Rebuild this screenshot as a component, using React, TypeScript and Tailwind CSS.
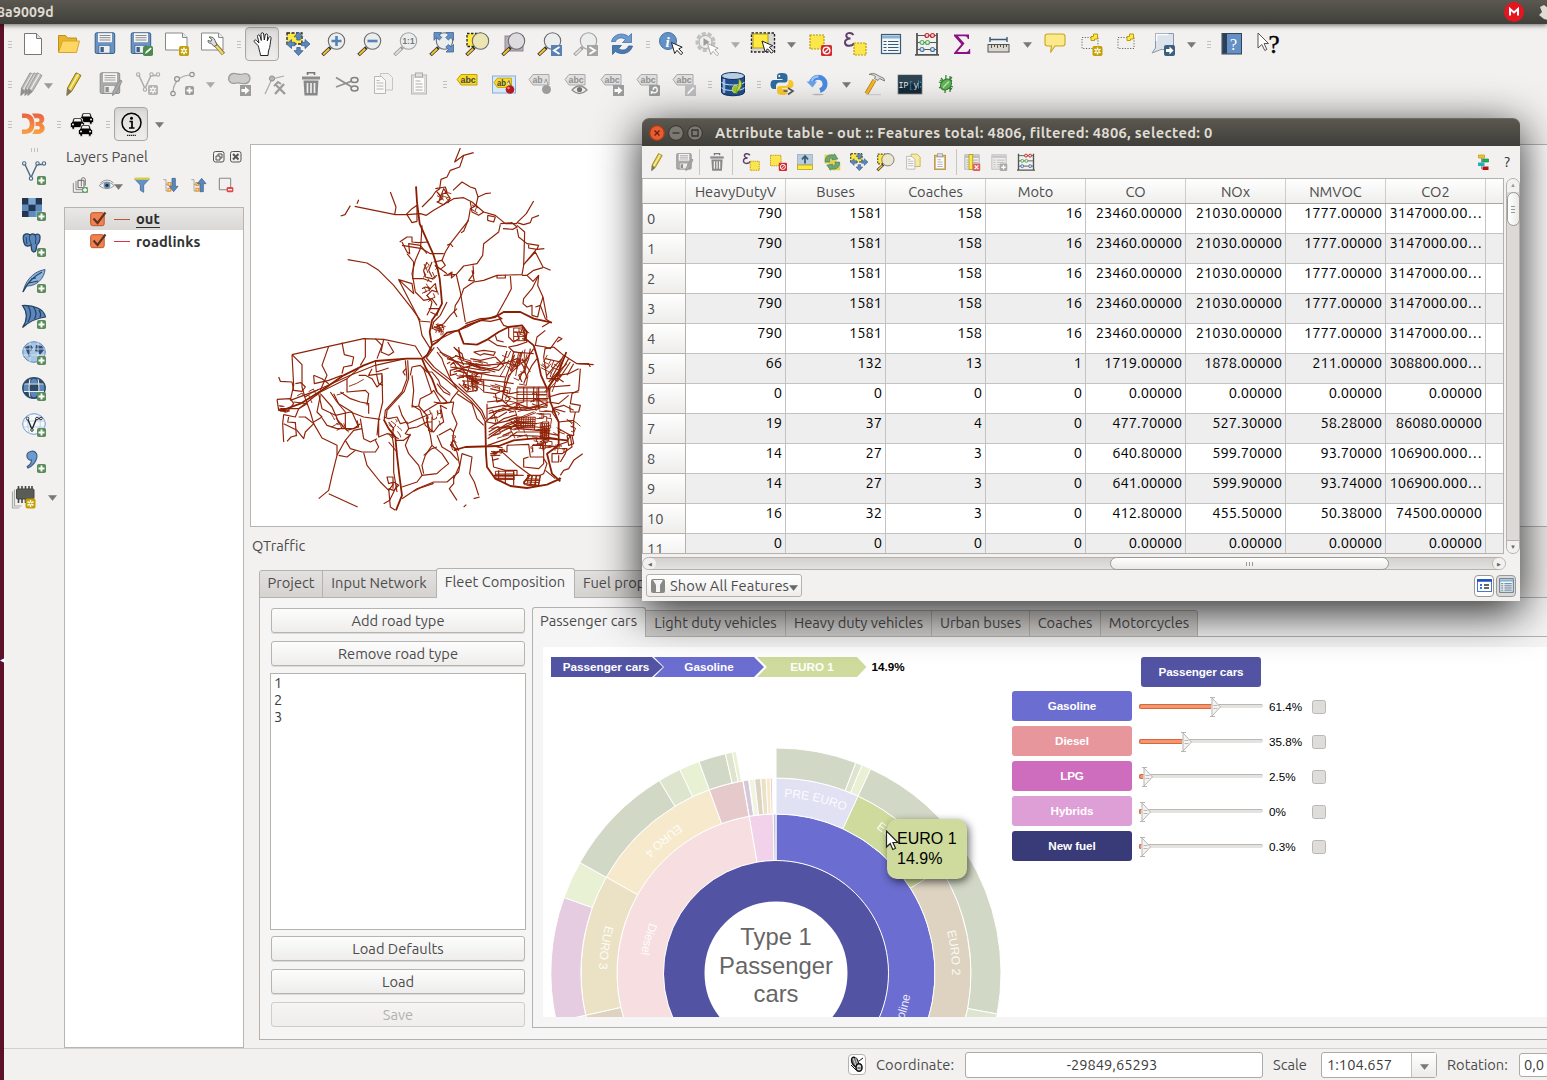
import React from "react";

type Kids = { children?: React.ReactNode };

/* ------------------------------------------------------------------ */
/* Icon helpers                                                        */
/* ------------------------------------------------------------------ */

function Ico({ children, dim, s = 24 }: Kids & { dim?: boolean; s?: number }) {
  return (
    <svg width={s} height={s} viewBox="0 0 24 24" fill="none" className={dim ? "shrink-0 overflow-visible opacity-80" : "shrink-0 overflow-visible"}>
      {children}
    </svg>
  );
}

const GoldBadge = ({ x = 14, y = 14, c = "#c4a000" }) => (
  <g>
    <rect x={x} y={y} width="10" height="10" rx="1.8" fill={c} />
    <path d={`M${x + 5} ${y + 1.5}v7M${x + 2} ${y + 3.2}l6 3.6M${x + 8} ${y + 3.2}l-6 3.6`} stroke="#fff" strokeWidth="1.5" />
    <circle cx={x + 5} cy={y + 5} r="1" fill={c} />
  </g>
);
const PlusBadge = ({ x = 15, y = 15, c = "#5a8c5a" }) => (
  <g>
    <rect x={x} y={y} width="9" height="9" rx="1.8" fill={c} />
    <path d={`M${x + 4.5} ${y + 1.5}v6M${x + 1.5} ${y + 4.5}h6`} stroke="#fff" strokeWidth="1.9" />
  </g>
);
const NoBadge = ({ x = 13, y = 13 }) => (
  <g>
    <rect x={x} y={y} width="11" height="11" rx="1.5" fill="#d42a2f" />
    <circle cx={x + 5.5} cy={y + 5.5} r="3.4" stroke="#fff" strokeWidth="1.3" />
    <path d={`M${x + 3.2} ${y + 7.8}l4.6-4.6`} stroke="#fff" strokeWidth="1.3" />
  </g>
);
const Cursor = ({ x = 12, y = 10 }) => (
  <path transform={`translate(${x} ${y})`} d="M0 0l3.2 11 2.3-3.2 4 4.4 1.8-1.7-4-4.2 3.4-1.6z" fill="#fff" stroke="#222" strokeWidth="1" />
);

function Lens({ gray, children, fill = "#eceded" }: Kids & { gray?: boolean; fill?: string }) {
  return (
    <>
      <path d="M8.5 15.5l-8 7.5" stroke={gray ? "#999" : "#333"} strokeWidth="3.6" />
      <path d="M7.2 16.7l-6 5.7" stroke={gray ? "#ddd" : "#f6c12b"} strokeWidth="2" />
      <circle cx="14.5" cy="9" r="8.2" fill={fill} stroke={gray ? "#a0a0a0" : "#6b6b6b"} strokeWidth="1.1" />
      {children}
    </>
  );
}

const Page = () => (
  <>
    <path d="M.5 1h17l4.500 4.500v12.500H.5z" fill="#fff" stroke="#888" strokeWidth="1" />
    <path d="M17.500 1v4.500h4.500" stroke="#888" strokeWidth="1" fill="#eee" />
  </>
);

const Floppy = ({ c = "#6a93c4", d = "#3b5f86" }) => (
  <>
    <rect x="2.200" y=".8" width="19.500" height="20.700" rx="1.500" fill={c} stroke={d} strokeWidth="1" />
    <rect x="5" y="1.200" width="14" height="9" fill="#f5f5f5" />
    <path d="M6.500 3.500h11M6.500 5.700h11M6.500 8h11" stroke="#8a8a8a" strokeWidth="1" />
    <rect x="6" y="13.500" width="11" height="7.600" fill="#eee" stroke={d} strokeWidth=".6" />
    <rect x="7.500" y="15" width="3.300" height="5" fill={d} />
  </>
);

const Abc = ({ c = "#f6d929", s = "#c4a000", t = "abc" }) => (
  <>
    <path d="M1 7.500l4-5h16v10.500H5z" fill={c} stroke={s} strokeWidth="1" />
    <text x="4.500" y="11" fontSize="9.800" fontWeight="700" fontFamily="Liberation Sans, sans-serif" fill={c === "#f6d929" ? "#444" : "#777"} textLength={t.length * 5.100} lengthAdjust="spacingAndGlyphs">{t}</text>
  </>
);

const Eps = () => (
  <path d="M10.500 3C8-.5 2 1 3.500 4.500 4 6 6 6.500 7.500 6.500 4.500 6.500 1.500 8 2 11c.6 4 7.500 3.500 9 .2" stroke="#5d3f6a" strokeWidth="2" fill="none" />
);

const Hex = () => (
  <g fill="#5b87bd" stroke="#37608f" strokeWidth=".8">
    <path d="M12.500 0l4.500 4.800h-2.800V8h-3.400V4.800H8z" />
    <path d="M12.500 23.500l4.500-4.800h-2.800V15.500h-3.400v3.200H8z" />
    <path d="M.5 12l5-4.500v2.800H9v3.400H5.500v2.800z" />
    <path d="M24 12l-5-4.500v2.800h-3.500v3.400H19v2.800z" />
  </g>
);

const Pencil = ({ c = "#e2c62e", d = "#8a7414", dx = 0 }) => (
  <g transform={`translate(${dx} 0)`}>
    <path d="M14 .8l5 2.600L9.500 19.500 4.800 23.500 5.500 16z" fill={c} stroke={d} strokeWidth="1" />
    <path d="M16.300 2.200L7.600 17.500" stroke="#fff" strokeOpacity=".7" strokeWidth="1.500" />
    <path d="M5.500 16l4 3.500-4.700 4z" fill="#777" />
  </g>
);

const Abacus = () => (
  <g strokeWidth="1.200">
    <path d="M2 1v21M22 1v21M0 22.800h24" stroke="#555" strokeWidth="1.800" />
    <path d="M2 3.500h20M2 10.500h20M2 17.500h20" stroke="#555" />
    <g fill="#f5d0d0" stroke="#c0282d"><circle cx="12" cy="3.500" r="2" /><circle cx="17.500" cy="3.500" r="2" /></g>
    <g fill="#d8f0d8" stroke="#5bab5b"><circle cx="7" cy="10.500" r="2" /><circle cx="12.500" cy="10.500" r="2" /></g>
    <g fill="#d0e0f0" stroke="#4a7ba6"><circle cx="7" cy="17.500" r="2" /><circle cx="17.500" cy="17.500" r="2" /></g>
  </g>
);

const Trash = () => (
  <>
    <path d="M8.500 3V.8h7V3" stroke="#777" strokeWidth="1.600" />
    <path d="M3 4.500h18v3H3z" fill="#8c8c8c" />
    <path d="M4.500 8.500h15l-1 15h-13z" fill="#888" />
    <path d="M8.500 11v10M12 11v10M15.500 11v10" stroke="#eee" strokeWidth="1.700" />
  </>
);

const Clip = ({ g }: { g?: boolean }) => (
  <>
    <rect x="4.500" y="3" width="15" height="19" fill={g ? "#ddd" : "#d9b36c"} stroke={g ? "#aaa" : "#b98a35"} />
    <rect x="6.500" y="5.500" width="11" height="15" fill="#fff" stroke="#bbb" strokeWidth=".6" />
    <rect x="8.500" y="1" width="7" height="4" fill="#ddd" stroke="#999" />
    <path d="M8.500 9h5M8.500 12h7M8.500 15h7M8.500 18h7" stroke="#999" />
  </>
);

const Copy = ({ y }: { y?: boolean }) => (
  <>
    <path d="M9.500 1.500h8l4 4v12.500h-12z" fill={y ? "#f5eaa0" : "#f0f0f0"} stroke={y ? "#bda83a" : "#bbb"} />
    <path d="M3.500 4.500h7l4 4V21.500h-11z" fill="#fafafa" stroke="#aaa" />
    <path d="M5.500 11h7M5.500 14h7M5.500 17h7M5.500 8.500h3" stroke="#aaa" />
  </>
);

const VLine = ({ c = "#4c6b86" }) => (
  <g stroke={c} strokeWidth="1.400">
    <path d="M3 3.500l6 13 6-13h5" />
    <g fill="#f2f1f0" strokeWidth="1.100"><circle cx="2.200" cy="2.400" r="1.700" /><circle cx="9" cy="17.500" r="1.700" /><circle cx="15.500" cy="2.400" r="1.700" /><circle cx="22" cy="2.400" r="1.700" /></g>
  </g>
);

const Table = ({ g }: { g?: boolean }) => (
  <>
    <rect x="2.500" y="2.500" width="19" height="19" fill={g ? "#eee" : "#f4f8fb"} stroke={g ? "#aaa" : "#3a5b78"} strokeWidth="1.200" />
    <path d="M3 5h18" stroke={g ? "#bbb" : "#8db3d0"} strokeWidth="3" />
    <path d="M4.500 9.500h3M9 9.500h10.500M4.500 12.500h3M9 12.500h10.500M4.500 15.500h3M9 15.500h10.500M4.500 18.500h3M9 18.500h10.500" stroke={g ? "#aaa" : "#3a5b78"} strokeWidth="1.200" />
  </>
);

const YSel = ({ x = 2, y = 2, s = 15 }) => <rect x={x} y={y} width={s} height={s} fill="#fbe74b" stroke="#b89a10" strokeWidth="1.200" strokeDasharray="2 1" />;

/* ------------------------------------------------------------------ */
/* Toolbar parts                                                       */
/* ------------------------------------------------------------------ */

const Slot = ({ children }: Kids) => <div className="flex h-10 w-9 shrink-0 items-center justify-center">{children}</div>;
const Pressed = ({ children }: Kids) => (
  <div className="-mx-px flex h-[34px] w-[34px] shrink-0 items-center justify-center rounded-[4px] border border-[#aaa7a3] bg-gradient-to-b from-[#dddbd9] to-[#efeeed] shadow-inner">{children}</div>
);
const Grip = ({ first }: { first?: boolean }) => (
  <div className={first ? "flex w-[11px] shrink-0 flex-col items-center gap-[2px] pl-px" : "flex w-[13px] shrink-0 flex-col items-center gap-[2px] pl-[3px]"}>
    <i className="h-px w-1 bg-[#c3c1be]" />
    <i className="h-px w-1 bg-[#c3c1be]" />
    <i className="h-px w-1 bg-[#c3c1be]" />
  </div>
);
const Tri = ({ c = "#777" }) => (
  <svg width="9" height="6" viewBox="0 0 9 6" className="shrink-0"><path d="M.5.5h8L4.500 5.500z" fill={c} stroke={c} strokeOpacity=".5" /></svg>
);
const Drop = ({ c }: { c?: string }) => <div className="flex w-5 shrink-0 items-center justify-center pt-[2px]"><Tri c={c} /></div>;

function ToolbarMain() {
  return (
    <div className="flex h-10 items-center">
      <Grip first />
      <Slot><Ico><path d="M3.500 1.500h12l5 5v16h-17z" fill="#fff" stroke="#777" /><path d="M15.500 1.500v5h5" fill="#ddd" stroke="#777" /></Ico></Slot>
      <Slot><Ico><path d="M1.500 20V3.500h7l2 2.500h9v3" fill="#e5b52c" stroke="#c08f1a" /><path d="M1.500 20.500L5.500 9h17l-3 11.500z" fill="#fdd663" stroke="#d7a52a" /></Ico></Slot>
      <Slot><Ico><Floppy /></Ico></Slot>
      <Slot><Ico><Floppy /><rect x="14" y="14" width="10" height="10" rx="1.800" fill="#4e8a50" /><path d="M16 22l1-2.500 4.500-4 1.200 1.200-4.500 4z" fill="#fff" /></Ico></Slot>
      <Slot><Ico><Page /><GoldBadge /></Ico></Slot>
      <Slot><Ico><Page /><path d="M13 11l9.500 11" stroke="#8c7a2a" strokeWidth="4.200" /><path d="M14.500 13l7.500 8.800" stroke="#f0d878" strokeWidth="2.200" /><path d="M8 5c3-.5 5.500 1 6 3.500l2 4.500-3 1.500-3-3.300C8 11.500 6.800 10.500 7 8.500l3 .8 1-1.800z" fill="#ddd" stroke="#555" strokeWidth=".9" /></Ico></Slot>
      <Grip />
      <Slot>
        <Pressed>
          <Ico><path d="M8 13.500L4.500 10C3.300 8.800 5 7.300 6.300 8.300L9 11 7.500 4.500C7.300 2.600 9.500 2.200 10 4l1.300 4.500L11 2.200C11 .3 13.500.2 13.700 2L14.300 8l.9-5c.3-1.700 2.700-1.400 2.500.4L17.300 9l1.500-3.500c.7-1.500 2.800-.7 2.300.9-1 3.500-.6 8-2.600 12.600L18 23.500H10.500L10 20.500C9 18.500 9.500 17 8 13.500z" fill="#fff" stroke="#222" strokeWidth="1" /></Ico>
        </Pressed>
      </Slot>
      <Slot><Ico><rect x="1" y="1" width="15" height="11" fill="#fde93f" stroke="#222" strokeWidth="1.300" strokeDasharray="3 1.500" /><Hex /></Ico></Slot>
      <Slot><Ico><Lens><path d="M14.500 4v10M9.500 9h10" stroke="#5482b8" strokeWidth="2.600" /></Lens></Ico></Slot>
      <Slot><Ico><Lens><path d="M9.500 9h10" stroke="#5482b8" strokeWidth="2.600" /></Lens></Ico></Slot>
      <Slot><Ico><Lens gray><text x="8.500" y="12.300" fontSize="9.500" fontWeight="700" fontFamily="Liberation Sans, sans-serif" fill="#777" textLength="12" lengthAdjust="spacingAndGlyphs">1:1</text></Lens></Ico></Slot>
      <Slot><Ico><Lens /><g fill="#6391c6" stroke="#3d6896" strokeWidth=".8"><path d="M4 .500h7.500L9.200 2.900l2.600 2.600-2.600 2.600L6.500 5.500 4 8.300zM23.500 .500H16l2.400 2.400-2.600 2.600 2.600 2.600L21 5.500l2.500 2.800zM23.500 20H16l2.400-2.400-2.600-2.600 2.600-2.600L21 15l2.500-2.600z" /></g></Ico></Slot>
      <Slot><Ico><rect x="1" y="1.500" width="15" height="13" fill="#fde93f" stroke="#222" strokeWidth="1.300" strokeDasharray="2.500 1.500" /><Lens fill="#ebe5b4" /></Ico></Slot>
      <Slot><Ico><rect x="3" y="4" width="18" height="15" fill="#b9aebb" stroke="#8f8593" /><Lens fill="#dddbe0" /></Ico></Slot>
      <Slot><Ico><Lens /><rect x="13" y="13" width="11" height="11" fill="#5682b4" /><path d="M21.500 15l-5.500 3.500 5.500 3.500" stroke="#fff" strokeWidth="1.900" /></Ico></Slot>
      <Slot><Ico><Lens gray /><rect x="13" y="13" width="11" height="11" fill="#a5a5a5" /><path d="M15.500 15l5.500 3.500-5.500 3.500" stroke="#fff" strokeWidth="1.900" /></Ico></Slot>
      <Slot><Ico><path d="M1.500 9.500C3 2.500 12-.5 18.500 4.500L21.500 1.500V10.500H12.500l3-3C11.500 4.500 7 6 5.500 9.500z" fill="#6d9bd0" stroke="#4673a8" strokeWidth=".8" /><path d="M22.500 14C21 21 12 24 5.500 19.500L2.500 22.500V13.500h9l-3 3c4 3 8.500 1.500 10-2.500z" fill="#4a7ab2" stroke="#37608f" strokeWidth=".8" /></Ico></Slot>
      <Grip />
      <Slot><Ico><circle cx="9" cy="9" r="8.500" fill="#6391c6" stroke="#4673a8" /><text x="6.500" y="14.500" fontSize="15" fontStyle="italic" fontWeight="700" fontFamily="Liberation Serif, serif" fill="#fff">i</text><Cursor x={12.500} y={10.500} /></Ico></Slot>
      <Slot><Ico dim><circle cx="10.500" cy="10" r="8.500" stroke="#b5b5b5" strokeWidth="3" strokeDasharray="4 2" fill="#ddd" /><circle cx="10.500" cy="10" r="6.500" fill="#eee" stroke="#999" /><path d="M8.500 6v8l6-4z" fill="#888" /><path transform="translate(12.500 11.500)" d="M0 0l3.200 11 2.300-3.200 4 4.400 1.800-1.700-4-4.200 3.400-1.600z" fill="#fff" stroke="#999" /></Ico></Slot>
      <Drop c="#aaa" />
      <Slot><Ico><rect x=".5" y="1" width="23" height="19" fill="#d8d8d8" stroke="#222" strokeWidth="1.400" strokeDasharray="2.500 1.500" /><path d="M2 2h15v14H2z" fill="#fde93f" stroke="#b89a10" /><Cursor x={11} y={9} /></Ico></Slot>
      <Drop />
      <Slot><Ico><YSel x={3} y={3} s={14} /><NoBadge x={14} /></Ico></Slot>
      <Slot><Ico><Eps /><YSel x={11} y={11} s={12} /></Ico></Slot>
      <Slot><Ico><Table /></Ico></Slot>
      <Slot><Ico><Abacus /></Ico></Slot>
      <Slot><Ico><path d="M3 2.500h15v4.500h-1.200C16.500 5 15.500 4.200 14 4.200H7l6.500 7.300-7.200 8.500H15c1.800 0 2.800-1 3.200-3h1v5H3V21l7.300-8.700L3 4z" fill="#8b1084" /></Ico></Slot>
      <Slot><Ico><path d="M3 7.500h17M3 5v5M20 5v5" stroke="#3a5b78" strokeWidth="1.400" /><rect x="1" y="12.500" width="21" height="7.500" fill="#d9d7cf" stroke="#55544f" /><path d="M4.500 13v3M7.500 13v2M10.500 13v3M13.500 13v2M16.500 13v3M19.500 13v2" stroke="#55544f" /></Ico></Slot>
      <Drop />
      <Slot><Ico><path d="M4.500 2h15q2.500 0 2.500 2.500v7q0 2.500-2.500 2.500H12l-4.500 6.500L8.500 14h-4Q2 14 2 11.500v-7Q2 2 4.500 2z" fill="#fbe98a" stroke="#c9a51c" strokeWidth="1.100" /></Ico></Slot>
      <Slot><Ico><rect x="3" y="5.500" width="16" height="11" stroke="#666" strokeDasharray="1.200 1.500" /><path d="M12 8.500v-4h2.500V2h4v5h-3v1.500z" fill="#fde93f" stroke="#b89a10" /><GoldBadge x={13.500} y={14} /></Ico></Slot>
      <Slot><Ico><rect x="3" y="5.500" width="16" height="11" stroke="#666" strokeDasharray="1.200 1.500" /><path d="M12 8.500v-4h2.500V2h4v5h-3v1.500z" fill="#fde93f" stroke="#b89a10" /></Ico></Slot>
      <Slot><Ico><path d="M4.500 1.500h18v16H10l-9 3.500 3.500-5z" fill="#dbe3ec" stroke="#8d99a8" /><path d="M5.500 9V2.500h12" stroke="#fff" strokeWidth="1.500" /><rect x="13" y="13" width="11" height="11" rx="2" fill="#3d5f7f" /><path d="M15 17h3.500v-2.500l4 4-4 4V20H15z" fill="#fff" /></Ico></Slot>
      <Drop />
      <Grip />
      <Slot><Ico><rect x="2" y="1.500" width="19.500" height="20.500" fill="#6391c6" stroke="#345" /><rect x="2.500" y="2" width="4.500" height="19.500" fill="#2d4053" /><text x="10" y="17.500" fontSize="16" fontFamily="Liberation Serif, serif" fill="#fff">?</text></Ico></Slot>
      <Slot><Ico><path d="M2 1v15l3.800-3.500 3 6 2-1-2.700-6H12.500z" fill="#fff" stroke="#555" /><text x="12.500" y="21" fontSize="25" fontFamily="Liberation Serif, serif" fill="#000" stroke="#000" strokeWidth=".4">?</text></Ico></Slot>
    </div>
  );
}

function ToolbarEdit() {
  return (
    <div className="flex h-10 items-center">
      <Grip first />
      <div className="flex w-[41px] items-center pl-[5px]">
        <Ico dim><Pencil c="#aaa" d="#888" dx={-4} /><Pencil c="#bbb" d="#888" /><Pencil c="#aaa" d="#888" dx={3} /></Ico>
        <div className="pt-1"><Tri c="#999" /></div>
      </div>
      <Slot><Ico><Pencil /></Ico></Slot>
      <Slot><Ico dim><Floppy c="#999" d="#777" /><path d="M22 8l2 1-6 12-3.500 2.500.5-4z" fill="#999" stroke="#777" /></Ico></Slot>
      <Slot><Ico dim><g transform="translate(2 0)"><VLine c="#999" /></g><GoldBadge x={14} y={13} c="#a5a5a5" /></Ico></Slot>
      <Slot><Ico dim><path d="M3 21C3 11 9 3 22 3" stroke="#999" strokeWidth="1.200" /><g fill="#f2f1f0" stroke="#777" strokeWidth="1.200"><circle cx="3" cy="21.500" r="2.200" /><circle cx="7" cy="7" r="2.400" /><circle cx="22" cy="2.500" r="2.200" /></g><PlusBadge c="#888" x={15} y={14} /></Ico></Slot>
      <Drop c="#aaa" />
      <div className="w-px" />
      <Slot><Ico dim><path d="M6 1.500c3-.5 6 2 10 .5 5-1.500 8 2 6.500 6.500-1.500 4-7 3.500-10 2.500-3-.8-6 1.500-9-.5-3.500-3-1.500-8.500 2.500-9z" fill="#c3c3c3" stroke="#888" strokeWidth="1.300" /><rect x="13" y="13" width="11" height="11" fill="#888" /><path d="M14.500 17h3.500v-2.500l4.500 4-4.500 4V20h-3.500z" fill="#fff" /></Ico></Slot>
      <Slot><Ico dim><path d="M2 22L9 7l12-3" stroke="#999" strokeWidth="1.200" /><circle cx="9" cy="6.500" r="2.600" fill="#aaa" stroke="#777" /><path d="M13 13l9 9M21 12l-9 10" stroke="#888" strokeWidth="2.400" /><path d="M11 14l4-4 3 2" stroke="#888" strokeWidth="2" /></Ico></Slot>
      <Slot><Ico><Trash /></Ico></Slot>
      <Slot><Ico dim><path d="M1 5.500l15 9M1 15l16-6" stroke="#777" strokeWidth="1.800" /><ellipse cx="19.500" cy="8" rx="3.500" ry="2.500" stroke="#666" strokeWidth="1.500" /><ellipse cx="19.500" cy="16.500" rx="3.500" ry="2.500" stroke="#666" strokeWidth="1.500" /></Ico></Slot>
      <Slot><Ico dim><Copy /></Ico></Slot>
      <Slot><Ico dim><Clip g /></Ico></Slot>
      <Grip />
      <Slot><Ico><Abc /></Ico></Slot>
      <Slot>
        <Ico><rect x=".5" y="4" width="23" height="17" fill="#d8e8f8" stroke="#86aedb" /><g transform="translate(1 4) scale(.88)"><Abc t="ab" /></g><path d="M15.500 11l1.500-2.500 1.500 5" stroke="#666" fill="#eee" /><circle cx="18" cy="17.500" r="4.300" fill="#b01c22" /><circle cx="16.500" cy="16" r="1.200" fill="#e88" /></Ico>
      </Slot>
      <Slot><Ico dim><Abc c="#ddd" s="#999" t="ab" /><circle cx="18.500" cy="17.500" r="4.500" fill="#888" /><path d="M16.500 11l1.500-4 2 6" stroke="#888" fill="#eee" /></Ico></Slot>
      <Slot><Ico dim><Abc c="#ddd" s="#999" /><path d="M8 18q7.500-8 15 0-7.500 7-15 0z" fill="#eee" stroke="#777" strokeWidth="1.300" /><circle cx="15.500" cy="17.500" r="2.600" fill="#555" /></Ico></Slot>
      <Slot><Ico dim><Abc c="#ddd" s="#999" /><rect x="13" y="13" width="11" height="11" fill="#888" /><path d="M14.500 17h3.500v-2.500l4.500 4-4.500 4V20h-3.500z" fill="#fff" /></Ico></Slot>
      <Slot><Ico dim><Abc c="#ddd" s="#999" /><rect x="13" y="13" width="11" height="11" rx="1" fill="#888" /><path d="M16 20c4 2 6-1 5-3.500-1-2-4.500-1-3.500 1.500M15.500 22v-3" stroke="#fff" strokeWidth="1.500" /></Ico></Slot>
      <Slot><Ico dim><Abc c="#ddd" s="#999" /><rect x="13" y="13" width="11" height="11" fill="#b5b5b5" /><path d="M15 22.500l1-2.500 5-5 1.300 1.300-5 5z" fill="#fff" /></Ico></Slot>
      <Grip />
      <Slot>
        <Ico><path d="M.5 4v16c0 5 23 5 23 0V4z" fill="#1f4f8f" stroke="#12305a" /><path d="M3 7v14" stroke="#8fb6e0" strokeWidth="2.500" /><ellipse cx="12" cy="4" rx="11.500" ry="3.500" fill="#b9cfe6" stroke="#12305a" /><path d="M.5 10c3 4 20 4 23 0M.5 15.500c3 4 20 4 23 0" stroke="#c3d6ea" strokeWidth="1.200" /><path d="M16.500 14c-3-2-6 1-5 5 1 3 4 2 5-1z" fill="#9ec62b" stroke="#dff08a" strokeWidth=".8" /><path d="M15 22c1-6 3-8 3-15 4 3 3 9-1 12z" fill="#c4e04a" stroke="#6d8f1a" strokeWidth=".7" /></Ico>
      </Slot>
      <Grip />
      <Slot>
        <Ico><path d="M12 1c-4.500 0-5 1.500-5 3.500V7h5.500v1H4C1.500 8 .5 10 .5 12.500S1.500 17 4 17h2v-3c0-2 1.500-3.500 3.500-3.500H15c1.500 0 2.500-1 2.500-2.500V4.500C17.500 2 15.500 1 12 1z" fill="#2f6b9e" /><circle cx="9.300" cy="4" r="1" fill="#fff" /><path d="M12.500 23c4.500 0 5-1.500 5-3.500V17H12v-1h8.500c2.500 0 3-2 3-4S22.500 8 20 8h-1.500v2.500c0 2-1.500 3.500-3.500 3.500H9.500C8 14 7 15 7 16.500v3c0 2.500 2 3.500 5.500 3.500z" fill="#fbc92f" /><path d="M13.500 19h4M18 16l5 3-5 3.500" stroke="#555" strokeWidth="1.600" /></Ico>
      </Slot>
      <Slot><Ico><path d="M5.500 11a6.800 6.800 0 1 1 8.500 7.500" stroke="#4a8be0" strokeWidth="5" /><path d="M5.500 9.500a6.800 6.800 0 0 1 7-5" stroke="#9cc4f2" strokeWidth="2.500" /><path d="M.5 9.500h10.500L6.500 15.500z" fill="#6aa2ea" /><ellipse cx="12" cy="22.500" rx="6" ry=".8" fill="#bbb" /></Ico></Slot>
      <Drop />
      <Slot><Ico><path d="M12.500 8L4.500 21.500" stroke="#ba7a10" strokeWidth="4.200" /><path d="M12.500 8L4.500 21.500" stroke="#f4b728" strokeWidth="2.600" /><path d="M7 2.500c3-2 6.500-1 9 1l6 3 .5 2.500-2-1-3-1.500-1.500 2-3.500-2 1-2C11 2.500 9 2.500 7 2.500z" fill="#ddd" stroke="#777" strokeWidth=".9" /><path d="M4 22.700h15" stroke="#ccc" strokeWidth="1" /></Ico></Slot>
      <Slot><Ico><rect x="0" y="3" width="24" height="19" fill="#152b3a" stroke="#888" strokeWidth=".8" /><rect x=".5" y="3.500" width="23" height="8" fill="#2c4453" /><text y="15.500" fontSize="8.300" fontFamily="Liberation Mono, monospace" fill="#e8e8e8"><tspan x=".5">IP</tspan><tspan fill="#3d8fb5">[</tspan>y</text><path d="M20.500 8.500v8M22.500 9.500v1.500M22.500 14v1.500" stroke="#3d8fb5" /></Ico></Slot>
      <Slot>
        <Ico><g stroke="#2f7d2f" strokeWidth="1.200"><path d="M5 10l14 5M7 6l10 12M12 3l-1 18M5 16l13-8M18 5l-7 8M6 8l12 9M16 4v16" /></g><ellipse cx="12" cy="12.500" rx="4.800" ry="6.200" fill="#63b35a" stroke="#2f7d2f" transform="rotate(45 12 12.500)" /><path d="M9 15.500l6-6" stroke="#bfe6b5" strokeWidth="1.300" /></Ico>
      </Slot>
    </div>
  );
}

function ToolbarPlugins() {
  const car = "M2 6l1.500-4h8L13 6l1.500 1.500v4H13v1.700h-2.500v-1.700h-6v1.700H2v-1.700H.5v-4z";
  return (
    <div className="flex h-10 items-center">
      <Grip first />
      <Slot>
        <Ico>
          <defs><linearGradient id="db" x1="0" y1="0" x2="0" y2="1"><stop offset="0" stopColor="#ea6443" /><stop offset="1" stopColor="#f7a240" /></linearGradient></defs>
          <path d="M1 1.500h3c6 0 9.500 4 9.500 10.500S10 22 4 22H1v-4.500h3c3 0 4.800-2 4.800-5.500S7 6 4 6H1z" fill="url(#db)" />
          <path d="M11 1.500h6c8 0 7.500 9 3.500 10.200 5 1.300 4.500 10.300-4 10.300H11c1.200-1 2-2.500 2.500-4.500H17c2.500 0 2.500-3.600 0-3.600h-2.500v-4H17c2 0 2-3.600 0-3.600h-3.500C13 4.500 12 3 11 1.500z" fill="url(#db)" />
        </Ico>
      </Slot>
      <Grip />
      <Slot>
        <Ico>
          {[[9, -1], [0, 4], [8, 11]].map(([x, y]) => (
            <g key={x} transform={`translate(${x} ${y})`}>
              <path d={car} fill="#000" stroke="#f2f1f0" strokeWidth=".7" />
              <path d="M3.500 5.500L4.500 3h6l1 2.500z" fill="#f2f1f0" /><circle cx="3" cy="8.500" r="1" fill="#f2f1f0" /><circle cx="12" cy="8.500" r="1" fill="#f2f1f0" />
            </g>
          ))}
        </Ico>
      </Slot>
      <Grip />
      <Slot><Pressed><Ico><circle cx="12.500" cy="10.800" r="9.500" stroke="#000" strokeWidth="1.500" /><circle cx="12.500" cy="6.200" r="1.500" fill="#000" /><path d="M10.500 9.500h2.500v6.500M10 16h5.500" stroke="#000" strokeWidth="1.700" /><path d="M8 23.300h9" stroke="#222" strokeWidth="1.300" strokeDasharray="1.300 .6" /></Ico></Pressed></Slot>
      <Drop />
    </div>
  );
}

/* ------------------------------------------------------------------ */
/* Left add-layer toolbar                                              */
/* ------------------------------------------------------------------ */

function LayerToolbar() {
  return (
    <div className="flex w-[60px] shrink-0 flex-col items-center pt-[4px]">
      <div className="mb-[3px] flex gap-[2px]">
        <i className="h-1 w-px bg-[#c3c1be]" /><i className="h-1 w-px bg-[#c3c1be]" /><i className="h-1 w-px bg-[#c3c1be]" />
      </div>
      {[
        <Ico key="v"><VLine /><PlusBadge /></Ico>,
        <Ico key="r"><path d="M0 1h20v19H0z" fill="#5e8abf" /><path d="M0 1h6.500v6.500H0zM13.500 1H20v6.500h-6.500zM6.500 7.500h7V14h-7zM0 14h6.500v6H0z" fill="#22364f" /><path d="M6.500 1h7v6.500h-7zM13.500 14H20v6h-6.500z" fill="#7fa5d3" /><PlusBadge /></Ico>,
        <Ico key="p"><path d="M2 2c2-2 5-1 6 0 2-1.500 4-1 5 0 3-1.800 5.500-.5 5 3-.3 3-1.500 6-3 6.500l-1 5.500c-1 3-4.500 2-4.500-1l-.5-4c-1 .5-3 1.500-4.500 1C1.500 12 .5 4 2 2z" fill="#5b87bd" stroke="#25415f" strokeWidth="1.300" /><path d="M8 2c-1.500 3 0 7 1.500 9.500M13 2c1.500 3 .5 6 .5 9M4 4c1 2 0 4 1 7" stroke="#25415f" /><PlusBadge /></Ico>,
        <Ico key="f"><path d="M1 23C3 14 9 3 23 .5 22.500 9 15 17 5 17z" fill="#8fb4dd" stroke="#3d5f85" /><path d="M1 23C4 15 12 7 20 3M9 10l5-1M7 14l9-2" stroke="#25415f" strokeWidth="1.100" /><PlusBadge /></Ico>,
        <Ico key="s"><path d="M.5.5C12 0 22 4 23.500 12 14 13 8 16 .5 22.500 5.500 15 6 8 .5.500z" fill="#5b87bd" stroke="#25415f" strokeWidth="1.200" /><path d="M6 1c4 6 3 11 0 16M11.500 2c3.500 5 3 8 1 12M17 5c2 3 2 5 1 7.500" stroke="#25415f" strokeWidth="1.200" /><PlusBadge /></Ico>,
        <Ico key="w"><ellipse cx="12" cy="11" rx="11.300" ry="10.300" fill="#a9c5e4" stroke="#5b87bd" /><path d="M3 6l6-2 2 3-3 4 1 4-2 1-2-5zM14 4l6 1 2 4-4 5-2-3-3-1z" fill="#2f4f76" /><path d="M1 8h22M1 14h22M8 1v20M16 1v20" stroke="#dce8f5" strokeWidth=".8" /><PlusBadge /></Ico>,
        <Ico key="g"><ellipse cx="12" cy="11" rx="11.300" ry="10.300" fill="#2b4a6b" /><path d="M8 7.500h8v6.500H8z" fill="#2b4a6b" /><path d="M1.500 7.500h5v6.500H1.500zM17.500 7.500h5v6.500H17.500z" fill="#5b87bd" /><path d="M8 6.500Q9 2 12 1.500 15 2 16 6.500zM8 15h8Q15 20 12 20.500 9 20 8 15z" fill="#5b87bd" /><path d="M1 7h22M1 14.500h22M8 1.500Q6 11 8 20.500M16 1.500Q18 11 16 20.500" stroke="#f2f1f0" strokeWidth="1.100" /><ellipse cx="12" cy="11" rx="11.300" ry="10.300" stroke="#2b4a6b" strokeWidth="1.200" /><PlusBadge /></Ico>,
        <Ico key="x"><ellipse cx="12" cy="11" rx="11.300" ry="10.300" fill="#f6f9fc" stroke="#6d9bd0" /><path d="M1 8h22M1 14h22M8 1c-3 6-3 14 0 20M16 1c3 6 3 14 0 20" stroke="#b9cfe8" /><path d="M5.500 5.500l4.500 11L14.500 5.500h5" stroke="#222" strokeWidth="1.400" /><g fill="#fff" stroke="#222" strokeWidth=".9"><circle cx="5.500" cy="5.500" r="1.300" /><circle cx="10" cy="17" r="1.300" /><circle cx="15" cy="5.500" r="1.300" /><circle cx="19" cy="5.500" r="1.300" /></g><PlusBadge /></Ico>,
        <Ico key="c"><path d="M8.500 2.500c5-1.500 8 3 5.500 8.500-1.500 3.500-4 6-8 8l-.8-1.500c3-1.500 4.300-4 4.300-6.500C5 12 2.500 4.500 8.500 2.500z" fill="#6d9bd0" stroke="#3d5f85" strokeWidth="1.200" /><PlusBadge /></Ico>,
      ].map((n, i) => (
        <div key={i} className="flex h-9 items-center justify-center">{n}</div>
      ))}
      <div className="flex h-9 w-full items-center gap-[12px] pt-px pl-[8px]">
        <Ico><path d="M.5 5.500V22h7M2.500 3.500V20h7" stroke="#aaa" strokeWidth="1.200" /><g stroke="#444" strokeWidth="1.600"><path d="M6.500 0v17M10 0v17M13.500 0v17M17 0v17M20 0v10" /></g><rect x="4.500" y="3" width="17.500" height="10" rx="1" fill="#5a5c58" stroke="#444" /><GoldBadge x={13.500} y={12.500} /></Ico>
        <Tri />
      </div>
    </div>
  );
}

/* ------------------------------------------------------------------ */
/* Layers panel                                                        */
/* ------------------------------------------------------------------ */

function LayerRow({ name, active }: { name: string; active?: boolean }) {
  return (
    <div className={active ? "flex h-[22px] items-center bg-gradient-to-b from-[#e9e8e7] to-[#dad8d6] pl-[25px]" : "flex h-[22px] items-center pl-[25px]"}>
      <svg width="17" height="16" viewBox="0 0 17 16" className="shrink-0"><rect x=".7" y="1.700" width="13.500" height="13" rx="2" fill="#f3814f" stroke="#bb5527" /><path d="M3.500 7.500l4 4.500L15.500 1.500" fill="none" stroke="#5b3524" strokeWidth="2.100" /></svg>
      <i className={active ? "ml-[7px] h-px w-4 bg-[#b5593a]" : "ml-[7px] h-px w-4 bg-[#dc3545]"} />
      <span className={active ? "ml-[6px] border-b border-[#333] text-[14.67px] leading-[17px] font-bold text-[#2c2c2c]" : "ml-[6px] text-[14.67px] leading-[17px] font-bold tracking-[0.1px] text-[#333]"}>{name}</span>
    </div>
  );
}

function LayersPanel() {
  const tree = (
    <><path d="M2 4h4v17h4M6 11h4" stroke="#888" /><path d="M9 8.500h4v4H9zM9 17h4v4H9z" stroke="#ef9a2d" strokeWidth="2" /></>
  );
  return (
    <div className="flex w-[180px] shrink-0 flex-col">
      <div className="flex h-[25px] items-center pl-[2px] text-[14.67px] text-[#4c4c4c]">
        <span className="flex-1 whitespace-nowrap">Layers Panel</span>
        <svg width="29" height="12" viewBox="0 0 29 12" fill="none" stroke="#555" className="mr-[2px] shrink-0"><rect x=".5" y=".5" width="10.500" height="10.500" rx="2" /><path d="M5 5V3h4v4H7M3 5h4v4H3z" /><rect x="17.500" y=".5" width="10.500" height="10.500" rx="2" /><path d="M20 3l5.500 5.500M25.500 3L20 8.500" strokeWidth="2" /></svg>
      </div>
      <div className="mb-[7px] flex h-[31px] shrink-0 items-center gap-[12px] pl-[8px]">
        <Ico s={16}><path d="M2 9v14h14M6 6v13h12" stroke="#888" strokeWidth="1.500" /><path d="M9 5h9v11H9z" stroke="#666" strokeWidth="1.500" /><path d="M14 14V4q0-3 3-3t3 3v9" stroke="#666" strokeWidth="1.300" /><PlusBadge c="#6b9f6b" /></Ico>
        <div className="-ml-px flex items-center"><Ico s={16}><path d="M0 13Q12 2 23 13q-11 9-23 0z" fill="#f5f5f5" stroke="#999" strokeWidth="1.500" /><path d="M2 9Q12 0 22 9" stroke="#999" strokeWidth="1.500" /><circle cx="12" cy="12.500" r="5" fill="#6d8fb8" /><circle cx="12" cy="12.500" r="2.500" fill="#234" /></Ico><div className="-mr-px -ml-px pt-1"><Tri /></div></div>
        <Ico s={16}><path d="M1 3h22l-8.500 9v11l-5-3v-8z" fill="#6391c6" stroke="#456f9f" strokeWidth="1.300" /><path d="M1 2.500h22" stroke="#d9cf4d" strokeWidth="3.500" /></Ico>
        <Ico s={16}>{tree}<path d="M15 2h5v12h4l-6.500 8L11 14h4z" fill="#5b87bd" stroke="#3d6896" strokeWidth="1.200" /></Ico>
        <Ico s={16}>{tree}<path d="M15 22h5V10h4l-6.500-8L11 10h4z" fill="#5b87bd" stroke="#3d6896" strokeWidth="1.200" /></Ico>
        <Ico s={16}><rect x="2" y="2" width="17" height="17" rx="1" stroke="#888" strokeWidth="1.600" /><rect x="13" y="15" width="10" height="8" rx="2" fill="#e4474b" /><path d="M15 19h6" stroke="#fff" strokeWidth="2" /></Ico>
      </div>
      <div className="min-h-0 flex-1 border border-[#b8b5b1] bg-white">
        <LayerRow name="out" active />
        <LayerRow name="roadlinks" />
      </div>
    </div>
  );
}

/* ------------------------------------------------------------------ */
/* Road map                                                            */
/* ------------------------------------------------------------------ */

const highways = [
  "497,123 500,170 508,235 530,285 548,325 560,362 568,400 572,440 575,475 562,500 545,525 538,560 545,600",
  "545,600 530,630 515,640 525,665 545,700 560,740",
  "545,600 560,590 590,562 625,555 650,540 700,522 735,515 760,500 810,500 850,520 905,532",
  "625,555 640,595 680,598 712,582 745,560 775,545 815,540 830,560 825,580 850,600 862,640 872,690 890,730",
  "515,640 470,640 375,647 340,660 280,690 215,735 150,775 90,797",
  "705,830 707,925 710,965 735,1000 780,1022 830,1028 890,1018 930,1000 925,998",
  "610,915 645,905 745,902 790,885 845,880 900,880 950,885",
  "400,822 415,850 435,875 440,930 447,990 455,1050 437,1095",
  "948,620 925,680 895,725 900,770 925,830 925,900 890,925 905,985 930,1008",
];

const roads = [
  "545,610 520,640 545,670 590,705 625,735 660,765 690,800 705,830", "552,606 528,638 552,666 595,700 630,731 664,760 695,796 706,822",
  "465,645 470,700 455,740 405,795 402,822", "472,645 475,700 462,738 410,795 408,815", "480,690 485,665 510,660 520,670 545,745", "560,740 590,770",
  "630,8 613,50 640,30 670,22", "640,30 628,65 600,75 590,95 572,102 568,130 555,140 545,155 515,185",
  "325,163 320,175", "271,212 284,208 300,181", "313,183 435,208 470,208 510,205 528,210 550,195 610,160 640,157 665,170 700,200 735,210 765,235 800,235",
  "420,140 437,185 433,208", "470,208 485,232 500,228 500,180 485,190 467,208", "608,135 635,110 660,125 675,130 683,155 705,145 722,143",
  "683,155 677,180 660,190 655,220 640,258 632,262", "850,167 828,205 800,232 820,238 840,232 845,218 866,210",
  "555,130 585,125 590,140 570,150 560,140 575,160 560,170 580,178 600,160 580,130 565,170", "655,225 635,250 600,295 585,320 575,345",
  "448,290 470,275 485,275 485,290 505,292 535,290", "455,290 470,320 478,325 475,295 510,300 530,325", "455,300 515,310 540,325 580,325",
  "515,240 512,290 510,310 495,345 485,385 490,410 495,440 520,465 545,460 560,480", "470,325 490,350 487,400 520,400 545,410",
  "292,343 350,353 385,375 430,420 485,490 510,525", "445,403 485,415 490,445 445,403 500,510 507,527 540,530", "507,527 515,570 540,610",
  "750,237 745,260 700,295 697,330 680,355 640,362 618,387 580,390", "590,300 600,295 608,305", "660,170 665,200 685,210 700,200",
  "712,210 735,215 730,230 712,225 712,210", "750,235 785,232 800,245 788,252 758,250", "800,240 823,260 820,360 815,388 740,390 700,405 670,410 640,430 635,445",
  "800,250 805,275 830,295 865,300 860,312 882,310", "835,298 835,308 860,312", "858,312 820,358 855,320 878,365 901,375", "878,367 850,375 830,390 815,390", "830,390 848,408 865,390 862,420 878,455 890,520",
  "865,390 845,430 820,460 818,475 830,485 845,480 845,510 862,515 870,480 855,485", "780,392 783,430 770,455 745,500 740,510",
  "618,388 630,440 635,470 645,530", "668,360 670,385 655,405 672,407 665,375", "740,390 740,398 765,398 765,388",
  "530,350 520,375 525,395 545,400 560,390", "545,350 535,375 545,395", "550,350 575,345 585,360 570,372 555,360 590,385", "590,390 605,380 603,398 615,388",
  "515,430 525,425 540,430 555,415 560,440 545,435 530,450 545,470 540,490 530,510", "535,490 565,490 560,510 540,500", "590,470 570,510 550,530 545,550 580,535 600,510 620,490",
  "635,445 625,465 615,480 612,500 620,515", "878,455 870,480 885,520 900,530 875,545", "885,555 860,575 855,600 885,605 900,610 925,575 935,580 920,590",
  "645,535 690,520 720,518 740,510 755,520 720,528 690,525 650,545 610,560 570,580 545,590", "745,515 760,540 775,545",
  "125,628 235,603 340,580 400,582 495,602 515,635", "125,628 155,658 155,725 165,760 180,800 190,835", "125,628 130,720 120,765", "235,603 215,660 230,690 210,735",
  "275,592 282,628 310,635 305,660 280,665 275,685", "345,580 345,635 330,660", "400,582 392,620 415,630 430,620 412,590", "375,580 395,600 380,640",
  "80,762 120,760 130,775 110,800 85,795 80,762", "85,695 90,708 125,710 130,735 155,738 165,725 152,712 135,715", "100,808 97,835 100,890", "100,808 135,815 145,790 170,775 130,770",
  "115,815 112,830 135,832", "100,835 140,855 160,880 165,860 190,835 165,815 145,815", "110,888 122,875 140,870", "135,830 138,870",
  "190,690 192,715 235,705 275,690", "190,690 215,700 235,715", "120,765 200,735 300,690 375,660 465,640", "90,790 145,790 210,740 290,700 325,670",
  "205,745 215,790 255,810 300,800 340,815 390,822", "210,745 245,785 265,830 290,855 325,845 320,825", "240,740 260,770 285,800 285,850", "250,745 265,775 305,800 325,845",
  "270,740 300,760 330,770 355,775 355,805", "290,700 290,740 345,735 355,745 350,780", "325,690 345,690 365,700 380,725 395,710 395,685 355,690 365,670", "395,690 397,770 385,822 380,870",
  "190,830 215,815 200,800 210,750", "190,835 215,878 260,900 260,930 245,990 235,1035 205,1060", "215,818 230,840 260,850 295,850 310,850 330,835",
  "235,1045 322,1085", "260,930 285,885 310,855 335,850 340,880 360,890 380,880", "285,885 300,910 335,920 375,920 385,905 375,885", "340,922 350,960 390,1010 415,1035 430,1015",
  "265,930 290,935 315,915", "330,820 335,850", "385,822 385,850 385,875 410,865 430,870", "400,815 415,820 440,815 450,835 470,830 475,850 465,865 480,870 460,885 435,885",
  "415,830 430,850 425,870 445,880", "445,780 455,810 470,835 530,810 530,830 545,830", "375,645 378,680 415,668", "378,685 385,715 398,720", "467,670 458,680 465,690",
  "485,690 490,735 485,785 505,782 510,760 540,745 550,735 570,770", "505,782 530,810 520,800 560,775 605,770", "515,665 530,680 545,680 565,705 570,720 600,745",
  "485,780 510,795 525,840 550,860 565,840 580,830 570,780 590,790", "545,815 545,860 535,855 530,815", "550,770 580,775 610,770 605,800 620,835 610,860 605,900 620,920 628,960 610,1000",
  "475,850 500,845 530,830 540,870 545,900 525,930 515,960 520,985", "480,865 465,900 475,925 505,960 515,990", "545,900 575,925 595,955 570,975 560,985 515,990 500,1010 455,1025",
  "560,870 575,905 600,920 622,945", "565,870 600,850 610,860", "520,930 545,910 560,905", "455,1060 500,1030 550,1010 590,1010 625,980 635,925 665,935 658,985 672,1010 685,1050",
  "490,1038 510,1028 550,1014", "610,990 610,1015 597,1030 620,1065", "670,1060 688,1055", "640,1085 648,1078", "415,1030 430,1035 445,1020 430,1010 415,1015 410,995 428,995 428,1030", "415,1030 420,1085 435,1095", "400,1075 418,1065 440,1020",
  "415,890 440,920", "425,870 430,900 430,980 440,1040", "625,735 605,760 600,770", "560,715 580,740 600,750", "620,745 665,775 680,820 700,840", "560,620 575,640 580,655 600,700 620,730",
  "568,620 600,635 620,655 640,665 700,675 740,665 765,640", "580,630 620,650 650,690 690,695", "600,660 610,650 620,670 600,675 600,690 620,685", "590,655 600,650",
  "670,620 700,615 735,620 730,630 700,625 690,630 670,620", "660,640 690,645 735,635 760,660 745,675 690,665 655,650", "630,670 665,660 700,670 735,680", "665,700 720,705 760,710 790,715", "700,705 700,740 735,745 760,735 755,765 740,770 735,745",
  "620,700 650,690 680,710 680,735 650,740 625,715", "775,545 775,575 790,590 805,580 800,560 790,560", "815,545 830,590 800,600 775,605 790,620 850,625", "712,582 740,600 770,605", "735,570 740,585 760,590",
  "790,620 780,660 765,700 760,735", "850,610 830,640 805,660 775,690 760,745 780,760 765,775", "840,610 835,640 820,680 805,690 815,710", "860,640 845,660 830,690 820,715", "805,640 820,665 830,700", "815,640 840,680",
  "885,605 880,635 890,700 925,700 940,710", "885,610 910,605 940,630 980,655 1030,658", "940,630 925,660 905,695", "955,640 940,665 920,695", "960,650 940,680 930,695", "970,655 950,690", "925,690 955,685 985,670", "985,655 1015,655 1020,665",
  "990,670 985,735 965,745 960,775 990,780 985,800 960,800 958,780", "985,740 930,745 895,755 900,725 960,720", "895,770 925,775 955,750", "905,790 940,780 970,795", "975,800 970,825 925,830 905,800 910,790 945,800",
  "970,825 970,870 960,870 965,905 935,925 905,925 905,950 925,950 925,930", "950,870 965,870 970,895 955,900 950,870", "925,850 960,870 950,890 920,900", "935,910 950,910 945,925 930,950", "997,925 970,945 955,970 940,975 930,990",
  "705,830 740,800 780,790 830,795 870,790", "710,770 755,765 780,785 840,790", "710,775 710,830 735,835 780,825", "720,820 745,815 770,800", "712,880 760,845 800,830 860,835", "715,860 740,845 785,850", "712,900 770,880 800,860 870,860 925,870",
  "800,725 890,725 890,740 800,740", "820,725 820,770 800,775 840,790 895,770", "850,725 850,770", "865,725 865,790", "790,760 850,760 895,760", "840,770 860,760 890,780 870,785 845,775",
  "805,740 780,745 720,730", "875,830 875,880 895,885 895,830 875,830", "855,855 900,855", "770,900 835,897 840,935 880,935 880,900 845,900", "770,900 770,920 750,915 735,925 720,925", "835,935 820,940 820,965 865,970 880,955 880,935",
  "750,915 800,960 840,990 820,1010 825,1020", "720,930 750,930", "725,945 745,940", "725,930 730,965 765,975 800,975 800,990 730,990", "740,1000 790,1000", "790,975 790,1020", "745,975 745,1000", "765,975 765,1015", "735,990 820,990",
  "830,990 870,990 865,1020 820,1015 835,990", "845,990 840,1020", "858,990 855,1020", "825,1005 870,1005", "880,940 890,955 880,985 870,990", "885,975 915,1000", "600,900 625,915 610,885 600,900",
  "590,640 640,655 700,660 760,655 800,640", "600,665 650,675 720,690 765,695", "610,605 625,620 630,640 640,660", "615,610 635,625 640,645", "625,605 630,640",
  "715,850 760,820 800,808", "715,870 770,835 800,828", "710,790 760,780 800,790", "715,805 760,790 790,800", "780,825 800,845 860,845 900,850", "800,850 870,855", "780,870 860,872 920,880",
  "885,640 930,650", "890,690 915,660 935,640", "895,710 930,672 950,655", "610,680 640,672 680,684 720,680", "600,640 618,632 640,640", "560,605 580,630", "650,680 655,735", "665,685 668,738",
];

/* Deterministic generator for the local street fabric of a district. */
function streets(seed: number, x: number, y: number, w: number, h: number, n: number, tilt: number, len: number) {
  let s = seed;
  const rnd = () => {
    s = (s * 16807) % 2147483647;
    return s / 2147483647;
  };
  const out: string[] = [];
  for (let i = 0; i < n; i++) {
    let px = x + rnd() * w;
    let py = y + rnd() * h;
    let a = tilt + (rnd() - 0.5) * 0.3;
    let d = `M${px.toFixed(0)} ${py.toFixed(0)}`;
    const k = 2 + Math.floor(rnd() * 2);
    for (let j = 0; j < k; j++) {
      const l = len * (0.5 + rnd() * 0.8);
      px += Math.cos(a) * l;
      py += Math.sin(a) * l;
      a += rnd() < 0.4 ? Math.PI / 2 : (rnd() - 0.5) * 0.4;
      d += `L${px.toFixed(0)} ${py.toFixed(0)}`;
    }
    out.push(d);
  }
  return out.join("");
}

/* Regular block grid for planned quarters. */
function grid(x: number, y: number, w: number, h: number, nx: number, ny: number, skew: number) {
  let d = "";
  for (let i = 0; i <= nx; i++) d += `M${x + (w * i) / nx} ${y}l${-skew} ${h}`;
  for (let j = 0; j <= ny; j++) d += `M${x - (skew * j) / ny} ${y + (h * j) / ny}l${w} ${skew * 0.3}`;
  return d;
}

const fabric = [
  streets(11, 610, 625, 80, 90, 22, 0.25, 18),
  streets(23, 635, 680, 45, 45, 30, 0.4, 9),
  streets(31, 770, 610, 65, 90, 26, 1.9, 18),
  streets(47, 715, 780, 100, 100, 24, -0.35, 24),
  grid(800, 815, 55, 32, 8, 5, 2),
  grid(870, 835, 25, 45, 4, 5, 0),
  grid(800, 728, 90, 58, 3, 3, 0),
  grid(835, 990, 35, 30, 3, 3, 6),
  grid(735, 978, 55, 25, 1, 3, -2),
  grid(790, 548, 32, 38, 2, 3, 0),
  streets(61, 845, 740, 45, 150, 24, 0.02, 15),
  streets(71, 720, 695, 50, 70, 8, 0.2, 16),
  streets(79, 895, 635, 45, 65, 12, 2.1, 20),
  streets(83, 840, 885, 90, 25, 18, 0.1, 11),
  streets(97, 550, 535, 30, 22, 14, 0.4, 9),
  streets(101, 520, 350, 35, 100, 12, 1, 11),
  streets(103, 560, 135, 30, 30, 6, 0.4, 10),
  streets(107, 85, 780, 35, 20, 7, 0.1, 9),
  streets(109, 415, 820, 45, 50, 8, 0.8, 10),
  streets(113, 530, 790, 45, 45, 9, 1.3, 10),
  streets(127, 722, 900, 25, 25, 12, 0.1, 8),
  streets(131, 805, 550, 20, 40, 8, 0.1, 9),
  streets(137, 905, 790, 65, 70, 7, 0.5, 14),
  streets(139, 240, 790, 50, 45, 6, 1.1, 12),
  streets(149, 660, 175, 20, 25, 5, 0.5, 8),
  streets(151, 140, 700, 160, 60, 6, -0.4, 20),
  streets(157, 602, 860, 15, 45, 5, 1.2, 8),
].join("");

function RoadMap() {
  return (
    <svg width="392" height="380" viewBox="2 -1 1176 1140" fill="none" stroke="#8f2207" strokeLinejoin="round" className="shrink-0">
      <g strokeWidth="3.500">{roads.map((p, i) => <polyline key={i} points={p} />)}</g>
      <path d={fabric} strokeWidth="2.800" />
      <g strokeWidth="5.400" stroke="#8a1e02">{highways.map((p, i) => <polyline key={i} points={p} />)}</g>
    </svg>
  );
}

/* ------------------------------------------------------------------ */
/* Sunburst                                                            */
/* ------------------------------------------------------------------ */

const CX = 233;
const CY = 326;
const pt = (r: number, deg: number) => {
  const a = ((deg - 90) * Math.PI) / 180;
  return `${(CX + r * Math.cos(a)).toFixed(2)} ${(CY + r * Math.sin(a)).toFixed(2)}`;
};
const wedge = (r0: number, r1: number, a0: number, a1: number) => {
  const big = a1 - a0 > 180 ? 1 : 0;
  return `M${pt(r1, a0)}A${r1} ${r1} 0 ${big} 1 ${pt(r1, a1)}L${pt(r0, a1)}A${r0} ${r0} 0 ${big} 0 ${pt(r0, a0)}Z`;
};

const sage = "#d2d8c6";
const mint = "#dee5cf";
const lime = "#e8f1d4";
const wedges: [number, number, number, number, string][] = [
  [112.5, 159, 0, 221, "#6b6dd0"],
  [112.5, 159, 221, 350.3, "#f7dfe1"],
  [112.5, 159, 350.3, 359, "#f1d2ea"],
  [112.5, 159, 359, 360, "#c5c5d8"],
  [159, 195, 0, 24.9, "#e1e1f4"],
  [159, 195, 24.9, 57.8, "#cedb9c"],
  [159, 195, 57.8, 115, "#ddd3c0"],
  [159, 195, 230, 257.5, "#ddd3c0"],
  [159, 195, 257.5, 299.5, "#ebe2c5"],
  [159, 195, 299.5, 340, "#f7e9cb"],
  [159, 195, 340, 350.2, "#e6c9cb"],
  [159, 195, 350.3, 351.9, "#d5c8da"],
  [159, 195, 352.1, 353.7, "#f0f4e0"],
  [159, 195, 353.7, 355.5, "#ddd3c3"],
  [159, 195, 355.5, 357.1, "#ebe2c5"],
  [159, 195, 357.1, 358.3, "#f7e9cb"],
  [159, 195, 358.3, 358.9, "#e6c9cb"],
  [195, 225, 0, 20.8, sage],
  [195, 225, 20.8, 22.5, mint],
  [195, 225, 22.5, 24.9, lime],
  [195, 225, 24.9, 57.8, sage],
  [195, 225, 57.8, 100.5, sage],
  [195, 225, 100.5, 115, mint],
  [195, 225, 235, 257.5, lime],
  [195, 225, 257.5, 289.6, "#e5cce0"],
  [195, 225, 289.6, 299.4, lime],
  [195, 225, 299.4, 328.8, sage],
  [195, 225, 328.8, 334.7, mint],
  [195, 225, 334.7, 340, lime],
  [195, 225, 340, 347, sage],
  [195, 225, 347, 348.8, mint],
  [195, 225, 348.8, 349.8, lime],
];

/* radius, start angle, end angle (descending = counter-clockwise), text */
const labels: [number, number, number, string][] = [
  [176, 2.6, 60, "PRE EURO"],
  [176, 34.6, 80, "EURO 1"],
  [176, 76.2, 120, "EURO 2"],
  [178, 326.8, 280, "EURO 4"],
  [177, 285.6, 240, "EURO 3"],
  [136, 291.8, 240, "Diesel"],
  [136, 119.3, 60, "Gasoline"],
];

function Sunburst() {
  return (
    <svg width="460" height="370" viewBox="0 0 460 370" className="shrink-0 font-['Liberation_Sans',sans-serif]">
      <circle cx={CX} cy={CY} r="92" fill="none" stroke="#5254a3" strokeWidth="41" />
      {wedges.map(([r0, r1, a0, a1, c], i) => (
        <path key={i} d={wedge(r0, r1, a0, a1)} fill={c} stroke="#fff" strokeWidth="1" />
      ))}
      {labels.map(([r, a0, a1, t], i) => (
        <g key={t}>
          <path id={`arc${i}`} d={`M${pt(r, a0)}A${r} ${r} 0 0 ${a1 > a0 ? 1 : 0} ${pt(r, a1)}`} fill="none" />
          <text fontSize="12" fill="#fff" fillOpacity=".9"><textPath href={`#arc${i}`}>{t}</textPath></text>
        </g>
      ))}
      <g fontSize="23.800" fill="#666" textAnchor="middle">
        <text x={CX} y="298">Type 1</text>
        <text x={CX} y="327">Passenger</text>
        <text x={CX} y="355">cars</text>
      </g>
      <g fontSize="11.700" fontWeight="700" textAnchor="middle">
        <path d="M8 10h101l11 10-11 10H8z" fill="#5254a3" />
        <path d="M111 10h100l10 10-10 10H111l10-10z" fill="#6b6dd0" />
        <path d="M214 10h100l9.500 10-9.500 10H214l10-10z" fill="#cedb9c" />
        <text x="63" y="24" fill="#fff">Passenger cars</text>
        <text x="166" y="24" fill="#fff">Gasoline</text>
        <text x="269" y="24" fill="#fff">EURO 1</text>
        <text x="345" y="24" fill="#000">14.9%</text>
      </g>
    </svg>
  );
}

function Knob() {
  return (
    <svg width="12" height="22" viewBox="0 0 12 22" fill="none" className="absolute -top-[9px] left-full -ml-px max-w-none">
      <path d="M2 2v18L10.500 11z" fill="#f4f3f2" stroke="#b8b5b1" />
      <path d="M0 1.500h5M0 20.500h5" stroke="#b8b5b1" strokeWidth="1.200" />
      <path d="M3.500 9.500h4M3.500 12.500h4" stroke="#aaa" strokeWidth=".8" />
    </svg>
  );
}

const fuels = [
  { name: "Gasoline", pct: "61.4%", w: 72, cls: "bg-[#6b6dd0]" },
  { name: "Diesel", pct: "35.8%", w: 43, cls: "bg-[#e7969c]" },
  { name: "LPG", pct: "2.5%", w: 4, cls: "bg-[#ce6dbd]" },
  { name: "Hybrids", pct: "0%", w: 2, cls: "bg-[#de9ed6]" },
  { name: "New fuel", pct: "0.3%", w: 2, cls: "bg-[#393b79]" },
];

function FuelSliders() {
  return (
    <div className="ml-[9px] pt-[10px] font-['Liberation_Sans',sans-serif] text-[11.7px]">
      <div className="mb-1 ml-[129px] flex h-[30px] w-[120px] items-center justify-center rounded-[3px] bg-[#5254a3] font-bold tracking-[-0.1px] text-white">Passenger cars</div>
      {fuels.map((f) => (
        <div key={f.name} className="mb-[5px] flex h-[30px] items-center">
          <div className={`flex h-[30px] w-[120px] items-center justify-center rounded-[3px] font-bold tracking-[-0.1px] text-white ${f.cls}`}>{f.name}</div>
          <div className="relative ml-[7px] h-1 w-[124px] rounded-sm border-t border-[#bbb8b4] bg-[#e4e3e1]">
            <div className="relative -mt-px h-[5px] rounded-l-full border border-r-0 border-[#d6693c] bg-[#f59670]" style={{ width: f.w }}>
              <Knob />
            </div>
          </div>
          <span className="ml-[6px] w-[43px] pt-px text-black">{f.pct}</span>
          <i className="mt-px h-[14px] w-[14px] rounded-[2.5px] border border-[#bbb8b4] bg-[#dfdddb]" />
        </div>
      ))}
    </div>
  );
}

/* ------------------------------------------------------------------ */
/* QTraffic dock                                                       */
/* ------------------------------------------------------------------ */

const Btn = ({ children, off }: Kids & { off?: boolean }) => (
  <div className={`flex h-[25px] shrink-0 items-center justify-center rounded-[3px] border bg-gradient-to-b ${off ? "border-[#cfccc9] from-[#f5f4f3] to-[#efeeec] text-[#b3b0ad]" : "border-[#b7b4b0] from-[#fdfdfd] to-[#eeedec] text-[#4c4c4c] shadow-[0_1px_0_#dcdad8]"}`}>
    {children}
  </div>
);

const vehicleTabs = [
  { t: "Light duty vehicles", c: "w-[141px]" },
  { t: "Heavy duty vehicles", c: "w-[147px]" },
  { t: "Urban buses", c: "w-[99px]" },
  { t: "Coaches", c: "w-[72px]" },
  { t: "Motorcycles", c: "w-[98px] rounded-tr-[3px]" },
];

function QTrafficDock() {
  return (
    <div className="flex h-[521px] flex-col text-[14.67px] text-[#4c4c4c]">
      <div className="h-[41px] shrink-0 pt-[9px] pl-[2px]">QTraffic</div>
      <div className="relative z-10 -mb-px flex h-[30px] shrink-0 items-end pl-[9px] whitespace-nowrap">
        <div className="flex h-[28px] w-[64px] items-center justify-center rounded-tl-[3px] border border-[#b5b2ae] bg-gradient-to-b from-[#e3e1df] to-[#d5d3d0] pb-[2px]">Project</div>
        <div className="-ml-px flex h-[28px] w-[115px] items-center justify-center border border-[#b5b2ae] bg-gradient-to-b from-[#e3e1df] to-[#d5d3d0] pr-px pb-[2px]">Input Network</div>
        <div className="-ml-px flex h-[30px] w-[139px] items-center justify-center rounded-t-[3px] border border-b-0 border-[#b5b2ae] bg-[#f5f5f5] pr-px pb-[3px]">Fleet Composition</div>
        <div className="flex h-[28px] w-[110px] items-center border border-l-0 border-[#b5b2ae] bg-gradient-to-b from-[#e3e1df] to-[#d5d3d0] pb-[2px] pl-[8px]">Fuel properties</div>
      </div>
      <div className="ml-[9px] flex h-[443px] border border-r-0 border-[#b5b2ae] bg-[#f5f5f5]">
        <div className="ml-[10px] flex w-[256px] flex-col pt-[10px]">
          <div className="flex flex-col gap-2 px-px"><Btn>Add road type</Btn><Btn>Remove road type</Btn></div>
          <div className="mt-[7px] h-[257px] shrink-0 border border-[#b5b2ae] bg-white pl-[3px] leading-[17px] text-[#3c3c3c]">
            <div>1</div><div>2</div><div>3</div>
          </div>
          <div className="mt-[6px] flex flex-col gap-2 px-px"><Btn>Load Defaults</Btn><Btn>Load</Btn><Btn off>Save</Btn></div>
        </div>
        <div className="ml-[6px] flex min-w-0 flex-1 flex-col pt-[9px]">
          <div className="relative z-10 -mb-px flex h-[30px] items-end whitespace-nowrap">
            <div className="flex h-[30px] w-[114px] items-center justify-center rounded-t-[3px] border border-b-0 border-[#b5b2ae] bg-[#f5f5f5] pr-px pb-[3px]">Passenger cars</div>
            {vehicleTabs.map((v) => (
              <div key={v.t} className={`-ml-px flex h-[27px] items-center justify-center border border-[#b5b2ae] bg-gradient-to-b from-[#dfdddb] to-[#d2d0ce] pb-px ${v.c}`}>{v.t}</div>
            ))}
          </div>
          <div className="h-[392px] border border-r-0 border-[#b5b2ae] bg-[#f5f5f5] pt-[10px] pl-[10px]">
            <div className="flex h-[370px] overflow-hidden bg-white">
              <Sunburst />
              <FuelSliders />
            </div>
          </div>
        </div>
      </div>
    </div>
  );
}

/* ------------------------------------------------------------------ */
/* Attribute table window                                              */
/* ------------------------------------------------------------------ */

const columns = ["HeavyDutyV", "Buses", "Coaches", "Moto", "CO", "NOx", "NMVOC", "CO2"];
const busy = ["790", "1581", "158", "16", "23460.00000", "21030.00000", "1777.00000", "3147000.00…"];
const idle = ["0", "0", "0", "0", "0.00000", "0.00000", "0.00000", "0.00000"];
const rows = [
  busy, busy, busy, busy, busy,
  ["66", "132", "13", "1", "1719.00000", "1878.00000", "211.00000", "308800.000…"],
  idle,
  ["19", "37", "4", "0", "477.70000", "527.30000", "58.28000", "86080.00000"],
  ["14", "27", "3", "0", "640.80000", "599.70000", "93.70000", "106900.000…"],
  ["14", "27", "3", "0", "641.00000", "599.90000", "93.74000", "106900.000…"],
  ["16", "32", "3", "0", "412.80000", "455.50000", "50.38000", "74500.00000"],
  idle,
];

const Small = ({ children }: Kids) => <div className="flex w-[27px] shrink-0 items-center justify-center">{children}</div>;

function AttributeToolbar() {
  return (
    <div className="flex h-8 shrink-0 items-center pl-[1px]">
      <Small><Ico s={18}><Pencil /></Ico></Small>
      <Small><Ico s={18} dim><Floppy c="#999" d="#777" /><path d="M22 8l2 1-6 12-3.500 2.500.5-4z" fill="#999" stroke="#777" /></Ico></Small>
      <i className="mr-[3px] ml-[2px] h-[26px] w-px bg-[#c8c5c2]" />
      <Small><Ico s={18}><Trash /></Ico></Small>
      <i className="mr-[4px] ml-[2px] h-[26px] w-px bg-[#c8c5c2]" />
      <Small><Ico s={18}><Eps /><YSel x={11} y={11} s={12} /></Ico></Small>
      <Small><Ico s={18}><YSel x={2} y={3} s={14} /><NoBadge /></Ico></Small>
      <Small><Ico s={18}><rect x="2" y="2" width="20" height="14" fill="#b8cde0" stroke="#9ab" /><path d="M12 14V5M8 8.500L12 4l4 4.500" stroke="#3a5b78" strokeWidth="2.400" /><rect x="2" y="16" width="20" height="6" fill="#fde93f" stroke="#b89a10" /></Ico></Small>
      <Small><Ico s={18}><path d="M2 2h16v12H2zM8 12h15v11H8z" fill="#e6cf57" /><path d="M3 12C2 5 8 1 14 3l1-2 5 7-8 1 1-2C9 6 8 9 9 12zM22 12c1 7-5 11-11 9l-1 2-5-7 8-1-1 2c4 1 5-2 4-5z" fill="#69a878" stroke="#3f7a50" strokeWidth=".8" /></Ico></Small>
      <Small><Ico s={18}><rect x="1" y="1" width="15" height="11" fill="#fde93f" stroke="#222" strokeWidth="1.300" strokeDasharray="3 1.500" /><Hex /></Ico></Small>
      <Small><Ico s={18}><rect x="1" y="1.500" width="15" height="13" fill="#fde93f" stroke="#222" strokeWidth="1.300" strokeDasharray="2.500 1.500" /><Lens fill="#ebe5cc" /></Ico></Small>
      <Small><Ico s={18}><Copy y /></Ico></Small>
      <Small><Ico s={18}><Clip /></Ico></Small>
      <i className="mr-[1px] ml-[3px] h-[26px] w-px bg-[#c8c5c2]" />
      <Small><Ico s={18}><Table g /><rect x="8" y="2" width="5" height="20" fill="#fde93f" stroke="#a99417" /><rect x="13" y="14" width="10" height="10" rx="1.500" fill="#dd6063" /><path d="M15.500 16.500l5 5M20.500 16.500l-5 5" stroke="#fff" strokeWidth="1.700" /></Ico></Small>
      <Small><Ico s={18} dim><Table g /><rect x="13" y="14" width="10" height="10" rx="1.500" fill="#999" /><path d="M18 16v6M15 19h6" stroke="#fff" strokeWidth="1.700" /></Ico></Small>
      <Small><Ico s={18}><Abacus /></Ico></Small>
      <div className="flex-1" />
      <svg width="12" height="16" viewBox="0 0 12 16" className="mr-[14px] shrink-0"><path d="M3.500 1v14" stroke="#999" /><path d="M.5 1h6v3h-6z" fill="#f4c91d" stroke="#a98a10" strokeWidth=".6" /><path d="M4.500 5h6v3h-6z" fill="#1fb358" stroke="#127a3a" strokeWidth=".6" /><path d="M0 8.500h6.500v3.500H0z" fill="#20b0c0" /><path d="M4.500 12.500h6V16h-6z" fill="#b3130e" /></svg>
      <span className="mr-[10px] text-[14.67px] text-[#333]">?</span>
    </div>
  );
}

function AttributeWindow() {
  return (
    <div className="absolute top-[118px] left-[642px] z-20 flex h-[483px] w-[878px] flex-col rounded-t-[7px] bg-[#f2f1f0] shadow-[0_10px_44px_2px_rgba(0,0,0,0.82)]">
      <div className="flex h-7 shrink-0 items-center rounded-t-[7px] border-t border-[#6b6960] bg-gradient-to-b from-[#5a5850] to-[#3f3e39] pl-[7px]">
        <svg width="54" height="16" viewBox="0 0 54 16" fill="none" strokeWidth="1.300" className="shrink-0"><circle cx="8" cy="8" r="7.300" fill="#ec5b2e" stroke="#a73e1b" /><path d="M5.500 5.500l5 5M10.500 5.500l-5 5" stroke="#5b2412" /><circle cx="27" cy="8" r="7.300" fill="#7a7870" stroke="#34332f" strokeWidth="1" /><path d="M23.500 8h7" stroke="#34332f" /><circle cx="46" cy="8" r="7.300" fill="#7a7870" stroke="#34332f" strokeWidth="1" /><path d="M43 5h6v6h-6z" stroke="#34332f" /></svg>
        <span className="ml-[12px] text-[14.67px] font-bold tracking-[0.34px] whitespace-nowrap text-[#dfdbd2]">Attribute table - out :: Features total: 4806, filtered: 4806, selected: 0</span>
      </div>
      <AttributeToolbar />
      <div className="flex h-[376px] shrink-0">
        <div className="w-[862px] overflow-hidden border border-l-0 border-[#b5b2ae] bg-white">
          <div className="flex h-[25px] border-b border-[#a9a6a2] bg-gradient-to-b from-white to-[#efeeed] text-[14.67px] text-[#4c4c4c]">
            <div className="w-[44px] border-r border-l border-[#cfccc9]" />
            {columns.map((c) => (
              <div key={c} className="flex w-[100px] items-center justify-center border-r border-[#cfccc9] pt-px">{c}</div>
            ))}
          </div>
          {rows.map((r, i) => (
            <div key={i} className={i % 2 ? "flex h-[30px] bg-[#eeeeee]" : "flex h-[30px] bg-white"}>
              <div className="flex w-[44px] shrink-0 items-center border-r border-b border-l border-[#b5b2ae] bg-gradient-to-b from-white to-[#eeedec] pl-1 text-[14.67px] text-[#4c4c4c]">{i}</div>
              {r.map((v, j) => (
                <div key={j} className="w-[100px] shrink-0 border-r border-b border-[#c3c3c3] pr-[3px] text-right text-[14.67px] leading-[18px] whitespace-nowrap text-black">{v}</div>
              ))}
              <div className="flex-1 border-b border-[#c3c3c3]" />
            </div>
          ))}
        </div>
        <div className="ml-[2px] flex w-[14px] flex-col items-center rounded-full border border-[#b5b2ae] bg-[#dcdad7]">
          <div className="h-[13px] w-full rounded-t-full bg-[#f2f1f0] pt-[3px] text-center text-[6px] leading-[6px] text-[#999]">▲</div>
          <div className="flex h-[34px] w-[13px] shrink-0 flex-col items-center justify-center gap-[2px] rounded-full border border-[#9c9995] bg-gradient-to-r from-white to-[#eae9e7]">
            <i className="h-px w-1 bg-[#999]" /><i className="h-px w-1 bg-[#999]" /><i className="h-px w-1 bg-[#999]" />
          </div>
          <div className="flex-1" />
          <div className="flex h-[13px] w-full items-center justify-center rounded-b-full border-t border-[#b5b2ae] bg-[#f2f1f0] text-[6px] text-[#666]">▼</div>
        </div>
      </div>
      <div className="mt-[3px] flex h-[13px] w-[864px] shrink-0 items-center rounded-full border border-[#b5b2ae] bg-gradient-to-b from-[#d3d1ce] to-[#e3e1df]">
        <div className="flex h-full w-[13px] items-center justify-center rounded-full bg-[#f2f1f0] text-[5px] text-[#666]">◀</div>
        <div className="ml-[454px] flex h-[13px] w-[279px] items-center justify-center gap-[2px] rounded-full border border-[#9c9995] bg-gradient-to-b from-white to-[#eae9e7]">
          <i className="h-1 w-px bg-[#999]" /><i className="h-1 w-px bg-[#999]" /><i className="h-1 w-px bg-[#999]" />
        </div>
        <div className="flex-1" />
        <div className="flex h-full w-[13px] items-center justify-center rounded-full border-l border-[#b5b2ae] bg-[#f2f1f0] text-[5px] text-[#666]">▶</div>
      </div>
      <div className="flex flex-1 items-center pr-[4px] pl-[4px]">
        <div className="flex h-[23px] w-[156px] items-center rounded-[3px] border border-[#b5b2ae] bg-gradient-to-b from-white to-[#eeedec] pl-[4px] text-[14.67px] text-[#4c4c4c]">
          <svg width="14" height="14" viewBox="0 0 14 14" className="shrink-0"><rect width="14" height="14" rx="2" fill="#8a8885" /><path d="M2 1h10L9 6v7H5V6z" fill="#f5f5f5" /></svg>
          <span className="ml-[5px] tracking-[0.1px] whitespace-nowrap">Show All Features</span>
          <div className="pt-1"><Tri c="#666" /></div>
        </div>
        <div className="flex-1" />
        <div className="mr-[2px] flex h-[22px] w-[20px] items-center justify-center rounded-[4px] border border-[#9c9995] bg-white">
          <svg width="15" height="13" viewBox="0 0 15 13"><rect x=".5" y=".5" width="14" height="12" fill="#fff" stroke="#4a77c8" /><path d="M0 1.500h15" stroke="#1a4fc0" strokeWidth="2.500" /><path d="M3 6h2M3 9h2" stroke="#2e73dd" strokeWidth="2" /><path d="M7 6h5M7 9h5" stroke="#333" strokeWidth="1.500" /></svg>
        </div>
        <div className="flex h-[22px] w-[20px] items-center justify-center rounded-[4px] border border-[#9c9995] bg-[#dcdad7]"><Ico s={17}><Table /></Ico></div>
      </div>
    </div>
  );
}

/* ------------------------------------------------------------------ */
/* Status bar                                                          */
/* ------------------------------------------------------------------ */

function StatusBar() {
  return (
    <div className="flex h-[32px] items-center border-t border-[#d3d0cd] text-[14.67px] whitespace-nowrap text-[#4c4c4c]">
      <div className="ml-[844px] flex h-[21px] w-[18px] shrink-0 items-center justify-center rounded-[4px] border border-[#b5b2ae] bg-white">
        <svg width="14" height="17" viewBox="0 0 14 17" fill="none" stroke="#111"><ellipse cx="5" cy="6" rx="3" ry="5" fill="#777" strokeWidth="1.500" transform="rotate(-25 5 6)" /><path d="M3 2l3 8M5.500 1.500l2.500 7" stroke="#fff" strokeWidth=".7" /><ellipse cx="9" cy="11.500" rx="3" ry="3.800" fill="#ddd" strokeWidth="1.600" /><path d="M1 9l5 5M9 5l4-3M7.500 12h3" /></svg>
      </div>
      <span className="ml-[10px] w-[89px] shrink-0 tracking-[0.1px]">Coordinate:</span>
      <div className="flex h-[26px] w-[298px] shrink-0 items-center justify-center rounded-[3px] border border-[#aeaba7] bg-white pr-1 text-[#3c3c3c]">-29849,65293</div>
      <span className="ml-[10px] w-[48px] shrink-0">Scale</span>
      <div className="flex h-[26px] w-[116px] shrink-0 items-center rounded-[3px] border border-[#aeaba7] bg-white pl-[5px] text-[#3c3c3c]">
        <span className="w-[84px]">1:104.657</span>
        <div className="flex h-full flex-1 items-center justify-center border-l border-[#c3c0bd] bg-gradient-to-b from-white to-[#ecebe9] pt-1"><Tri /></div>
      </div>
      <span className="ml-[10px] w-[72px] shrink-0">Rotation:</span>
      <div className="flex h-[24px] w-[60px] shrink-0 items-center rounded-[3px] border border-[#aeaba7] bg-white pl-[4px] text-[#3c3c3c]">0,0</div>
    </div>
  );
}

export default function App() {
  return (
    <div className="relative flex h-[1080px] w-[1547px] flex-col overflow-hidden bg-[#f2f1f0] font-['Ubuntu','Noto_Sans',sans-serif] leading-5">
      <div className="relative z-10 flex h-6 shrink-0 items-center bg-gradient-to-b from-[#5a5850] to-[#403f3a] shadow-[0_1px_5px_rgba(0,0,0,0.6)]">
        <span className="-ml-[3px] flex-1 text-[14px] font-bold tracking-[0.2px] text-[#dfdbd2]">8a9009d</span>
        <svg width="45" height="24" viewBox="0 0 45 24" className="shrink-0"><circle cx="12" cy="12" r="10" fill="#e4151f" /><path d="M8 15.500V9l4 3.500L16 9v6.500" fill="none" stroke="#fff" strokeWidth="2" /><path d="M38 7l4-2 4 3v12l-4-1-5-4 3-3z" fill="#dfdbd2" /></svg>
      </div>
      <div className="flex min-h-0 flex-1">
        <div className="w-1 shrink-0 bg-[#5e1029]" />
        <div className="flex min-w-0 flex-1 flex-col">
          <ToolbarMain />
          <ToolbarEdit />
          <ToolbarPlugins />
          <div className="flex h-[904px] shrink-0">
            <LayerToolbar />
            <LayersPanel />
            <div className="ml-[6px] flex min-w-0 flex-1 flex-col">
              <div className="h-[383px] shrink-0 border border-r-0 border-[#b8b5b1] bg-white"><RoadMap /></div>
              <QTrafficDock />
            </div>
          </div>
          <StatusBar />
        </div>
      </div>
      <AttributeWindow />
      <div className="absolute top-[819px] left-[887px] h-[60px] w-[80px] rounded-[10px] bg-[#cedb9c] pt-[10px] pl-[10px] font-['Liberation_Sans',sans-serif] text-[16px] leading-5 whitespace-nowrap text-black shadow-[2px_3px_8px_rgba(0,0,0,0.6)]">
        EURO 1<br />14.9%
      </div>
      <svg width="14" height="22" viewBox="0 0 14 22" className="absolute top-[830px] left-[885px]"><path d="M1.500 1v16l3.700-3.500 2.600 6 2.700-1.200-2.600-5.800h5z" fill="#fff" stroke="#222" strokeWidth="1.200" /></svg>
      <div className="absolute top-[657px] left-0 text-[6px] leading-[6px] text-white">◀</div>
    </div>
  );
}
